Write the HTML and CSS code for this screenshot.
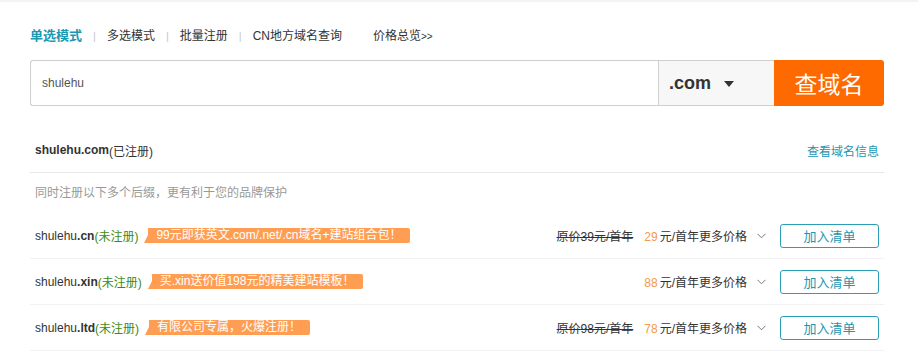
FILE: index.html
```html
<!DOCTYPE html>
<html lang="zh-CN">
<head>
<meta charset="utf-8">
<title>域名查询</title>
<link rel="stylesheet" href="styles.css">
</head>
<body>
<div class="topbar"></div>
<div class="wrap">
  <div class="tabs">
    <span class="tab active">单选模式</span><span class="sep">|</span>
    <span class="tab">多选模式</span><span class="sep">|</span>
    <span class="tab">批量注册</span><span class="sep">|</span>
    <span class="tab">CN地方域名查询</span>
    <span class="tab price-link">价格总览<small>&gt;&gt;</small></span>
  </div>

  <div class="search">
    <div class="input">shulehu</div>
    <div class="suffix"><span>.com</span><svg class="caret" width="10" height="6" viewBox="0 0 10 6"><path d="M0 0h10L5 6z" fill="#333"/></svg></div>
    <div class="go">查域名</div>
  </div>

  <div class="row main">
    <div class="name"><b>shulehu.com</b>(已注册)</div>
    <a class="info">查看域名信息</a>
  </div>
  <div class="tip">同时注册以下多个后缀，更有利于您的品牌保护</div>

  <div class="row item">
    <div class="name">shulehu<b>.cn</b><span class="free">(未注册)</span><span class="tag">99元即获英文.com/.net/.cn域名+建站组合包！</span></div>
    <div class="price"><s>原价39元/首年</s><em>29</em>元/首年更多价格</div>
    <svg class="chev" width="9" height="6" viewBox="0 0 9 6"><path d="M0.5 0.8L4.5 4.8L8.5 0.8" fill="none" stroke="#777" stroke-width="1"/></svg>
    <div class="add">加入清单</div>
  </div>
  <div class="row item">
    <div class="name">shulehu<b>.xin</b><span class="free">(未注册)</span><span class="tag">买.xin送价值198元的精美建站模板！</span></div>
    <div class="price"><em>88</em>元/首年更多价格</div>
    <svg class="chev" width="9" height="6" viewBox="0 0 9 6"><path d="M0.5 0.8L4.5 4.8L8.5 0.8" fill="none" stroke="#777" stroke-width="1"/></svg>
    <div class="add">加入清单</div>
  </div>
  <div class="row item">
    <div class="name">shulehu<b>.ltd</b><span class="free">(未注册)</span><span class="tag">有限公司专属，火爆注册！</span></div>
    <div class="price"><s>原价98元/首年</s><em>78</em>元/首年更多价格</div>
    <svg class="chev" width="9" height="6" viewBox="0 0 9 6"><path d="M0.5 0.8L4.5 4.8L8.5 0.8" fill="none" stroke="#777" stroke-width="1"/></svg>
    <div class="add">加入清单</div>
  </div>
</div>
</body>
</html>
```

FILE: styles.css
```css
* { box-sizing: border-box; }
body {
  margin: 0;
  background: #fff;
  font-family: "Liberation Sans", "Noto Sans CJK SC", sans-serif;
  font-size: 12px;
  color: #333;
}
.topbar { height: 2px; background: #f3f3f3; }
.wrap { width: 854px; margin-left: 30px; }

.tabs {
  margin-top: 26px;
  height: 16px;
  line-height: 16px;
  display: flex;
  align-items: center;
  font-size: 12px;
  color: #333;
}
.tab.active { color: #1b97b3; font-weight: bold; font-size: 13px; }
.sep { color: #c8c8c8; margin: 0 11px; font-size: 11px; }
.price-link { margin-left: 31px; }
.price-link small { font-size: 10px; }

.search {
  margin-top: 16px;
  display: flex;
  height: 46px;
}
.input {
  flex: 1;
  border: 1px solid #cfcfcf;
  border-right: none;
  border-radius: 3px 0 0 3px;
  padding-left: 11px;
  line-height: 44px;
  color: #555;
  font-size: 12px;
}
.suffix {
  width: 116px;
  background: #f7f7f7;
  border: 1px solid #cfcfcf;
  border-right: none;
  display: flex;
  align-items: center;
  padding-left: 10px;
  font-size: 18px;
  font-weight: bold;
  color: #333;
}
.caret { margin-left: 13px; margin-top: 2px; }
.go {
  width: 110px;
  background: #ff6a00;
  color: #fff;
  border-radius: 0 3px 3px 0;
  font-size: 23px;
  display: flex;
  align-items: center;
  justify-content: center;
  font-family: "Noto Sans CJK SC", sans-serif;
}

.row {
  display: flex;
  align-items: center;
  padding: 0 5px;
}
.row.main {
  margin-top: 22px;
  height: 45px;
  border-bottom: 1px solid #e8e8e8;
  justify-content: space-between;
}
.row.main b { font-weight: bold; }
.info { color: #1b97b3; font-size: 12px; }
.tip {
  height: 40px;
  line-height: 40px;
  padding-left: 5px;
  color: #999;
}
.row.item {
  height: 46px;
  border-bottom: 1px solid #f2f2f2;
}
.name { flex: 1; display: flex; align-items: center; white-space: nowrap; }
.free { color: #3c8a14; }
.tag {
  position: relative;
  margin-left: 10px;
  background: #ff9d52;
  color: #fff;
  height: 15px;
  line-height: 15px;
  padding: 0 9px 0 8px;
  border-radius: 0 2px 2px 0;
}
.tag::before {
  content: "";
  position: absolute;
  left: -4px;
  bottom: 0;
  border-bottom: 8px solid #ff9d52;
  border-left: 4px solid transparent;
}
.price { color: #333; white-space: nowrap; }
.price s { color: #333; margin-right: 11px; }
.price em { font-style: normal; color: #f39a4c; margin-right: 2px; }
.chev { margin-left: 10px; margin-right: 14px; }
.add {
  width: 99px;
  height: 24px;
  border: 1px solid #2b9db6;
  border-radius: 3px;
  color: #1b97b3;
  font-size: 13px;
  display: flex;
  align-items: center;
  justify-content: center;
}
```
